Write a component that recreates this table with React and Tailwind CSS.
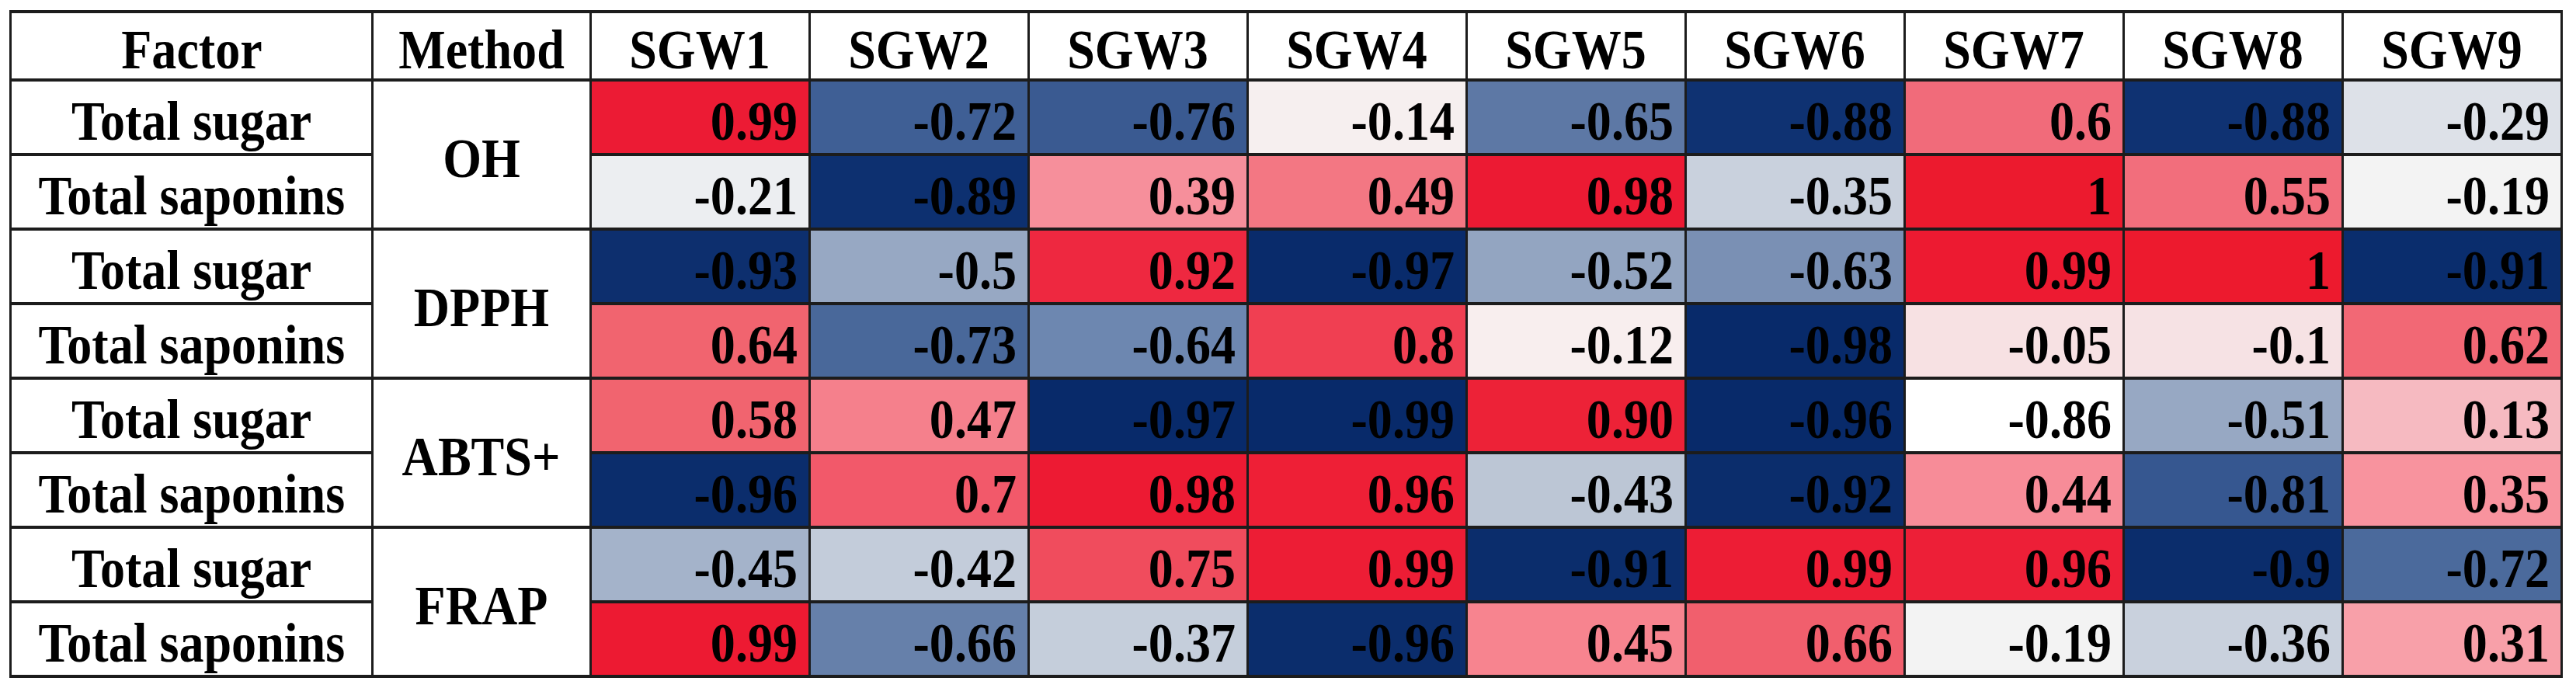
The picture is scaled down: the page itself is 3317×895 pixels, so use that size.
import React from "react";

const columns = ["SGW1", "SGW2", "SGW3", "SGW4", "SGW5", "SGW6", "SGW7", "SGW8", "SGW9"];

// each group = one method, two factors; cells are [value, background]
const groups = [
  {
    method: "OH",
    rows: [
      {
        factor: "Total sugar",
        cells: [
          ["0.99", "#ec1b34"], ["-0.72", "#3f5f95"], ["-0.76", "#3a5a91"],
          ["-0.14", "#f6efef"], ["-0.65", "#5d78a5"], ["-0.88", "#0f3272"],
          ["0.6", "#f16b7a"], ["-0.88", "#0f3272"], ["-0.29", "#dde1e8"],
        ],
      },
      {
        factor: "Total saponins",
        cells: [
          ["-0.21", "#eceef1"], ["-0.89", "#0d3070"], ["0.39", "#f68f9b"],
          ["0.49", "#f37783"], ["0.98", "#ec1a33"], ["-0.35", "#c9d1dd"],
          ["1", "#ec1a2e"], ["0.55", "#f26e7c"], ["-0.19", "#f3f3f3"],
        ],
      },
    ],
  },
  {
    method: "DPPH",
    rows: [
      {
        factor: "Total sugar",
        cells: [
          ["-0.93", "#0d2f6e"], ["-0.5", "#97a8c3"], ["0.92", "#ee2840"],
          ["-0.97", "#092b6b"], ["-0.52", "#93a5c1"], ["-0.63", "#7a90b4"],
          ["0.99", "#ed1a31"], ["1", "#ed1a2e"], ["-0.91", "#0a2d6d"],
        ],
      },
      {
        factor: "Total saponins",
        cells: [
          ["0.64", "#f1646f"], ["-0.73", "#49689a"], ["-0.64", "#6d87b0"],
          ["0.8", "#f03f52"], ["-0.12", "#f8eeee"], ["-0.98", "#082a6a"],
          ["-0.05", "#f7e1e3"], ["-0.1", "#f6e2e4"], ["0.62", "#f26875"],
        ],
      },
    ],
  },
  {
    method: "ABTS+",
    rows: [
      {
        factor: "Total sugar",
        cells: [
          ["0.58", "#f1646f"], ["0.47", "#f5808c"], ["-0.97", "#082a6a"],
          ["-0.99", "#082a6a"], ["0.90", "#ed2237"], ["-0.96", "#082a6a"],
          ["-0.86", "#ffffff"], ["-0.51", "#97a8c3"], ["0.13", "#f6bac1"],
        ],
      },
      {
        factor: "Total saponins",
        cells: [
          ["-0.96", "#0b2d6c"], ["0.7", "#f2596a"], ["0.98", "#ed1a33"],
          ["0.96", "#ee1f36"], ["-0.43", "#bcc6d5"], ["-0.92", "#0b2d6c"],
          ["0.44", "#f78c98"], ["-0.81", "#365790"], ["0.35", "#f8939e"],
        ],
      },
    ],
  },
  {
    method: "FRAP",
    rows: [
      {
        factor: "Total sugar",
        cells: [
          ["-0.45", "#a4b3ca"], ["-0.42", "#c3ccda"], ["0.75", "#f04c5d"],
          ["0.99", "#ed1d35"], ["-0.91", "#0b2d6c"], ["0.99", "#ed1d35"],
          ["0.96", "#ed1f37"], ["-0.9", "#0b2d6c"], ["-0.72", "#4b6a9c"],
        ],
      },
      {
        factor: "Total saponins",
        cells: [
          ["0.99", "#ed1a32"], ["-0.66", "#6680aa"], ["-0.37", "#c5cedb"],
          ["-0.96", "#0b2d6c"], ["0.45", "#f7848f"], ["0.66", "#f15f6d"],
          ["-0.19", "#f3f3f3"], ["-0.36", "#c9d1dd"], ["0.31", "#f8a0a9"],
        ],
      },
    ],
  },
];

const Label = ({ children, className = "" }) => (
  <div className={"flex items-center justify-center bg-white pt-[10px] " + className}>
    <span className="inline-block scale-x-[0.89] whitespace-nowrap">{children}</span>
  </div>
);

export default function App() {
  return (
    <div className="min-h-screen bg-white pl-[12px] pt-[13px] [font-family:'Liberation_Serif','Times_New_Roman',serif] text-[72px] leading-none font-bold text-black">
      <div className="inline-grid grid-cols-[463px_278px_repeat(9,279px)] grid-rows-[84px_repeat(8,92px)] gap-x-[3px] gap-y-[4px] bg-[#1c1c1c] px-[3px] py-[4px]">
        {/* header */}
        <Label className="pt-[8px]">Factor</Label>
        <Label className="pt-[8px]">Method</Label>
        {columns.map((c) => (
          <Label key={c} className="pt-[8px]">
            {c}
          </Label>
        ))}

        {groups.map((g) =>
          g.rows.map((row, i) => (
            <React.Fragment key={g.method + i}>
              <Label>{row.factor}</Label>
              {i === 0 && <Label className="row-span-2">{g.method}</Label>}
              {row.cells.map(([v, bg], j) => (
                <div
                  key={j}
                  className="flex items-center justify-end pr-[14px] pt-[10px]"
                  style={{ backgroundColor: bg }}
                >
                  <span className="inline-block origin-right scale-x-[0.89]">{v}</span>
                </div>
              ))}
            </React.Fragment>
          ))
        )}
      </div>
    </div>
  );
}
